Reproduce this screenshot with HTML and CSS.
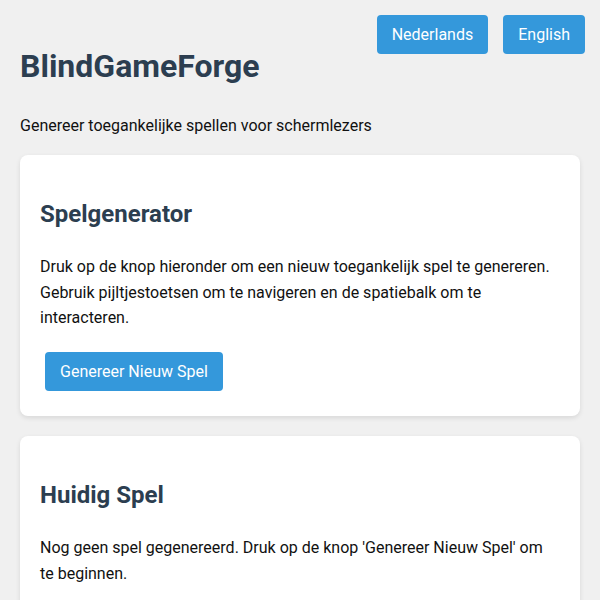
FILE: index.html
```html
<!DOCTYPE html>
<html lang="nl">
<head>
  <meta charset="UTF-8">
  <title>BlindGameForge</title>
  <link rel="stylesheet" href="styles.css">
</head>
<body>

  <div class="talen">
    <button class="knop">Nederlands</button>
    <button class="knop">English</button>
  </div>

  <h1>BlindGameForge</h1>
  <p>Genereer toegankelijke spellen voor schermlezers</p>

  <div class="kaart">
    <h2>Spelgenerator</h2>
    <p>Druk op de knop hieronder om een nieuw toegankelijk spel te genereren. Gebruik pijltjestoetsen om te navigeren en de spatiebalk om te interacteren.</p>
    <button class="knop">Genereer Nieuw Spel</button>
  </div>

  <div class="kaart">
    <h2>Huidig Spel</h2>
    <p>Nog geen spel gegenereerd. Druk op de knop 'Genereer Nieuw Spel' om te beginnen.</p>
  </div>

</body>
</html>
```

FILE: styles.css
```css
body { font-family: Roboto, "Liberation Sans", Arial, sans-serif; line-height: 1.6; margin: 0; padding: 20px; background-color: #f0f0f0; color: #111; }
h1, h2 { color: #2c3e50; }
h1 { font-size: 32px; margin: 21px 0; }
h2 { font-size: 24px; margin: 20px 0 21px; }
p { margin: 16px 0; }
.talen { float: right; display: flex; gap: 15px; margin: -5px -5px 0 0; }
.kaart { background: #fff; border-radius: 8px; padding: 20px 20px 20px; margin-bottom: 20px; box-shadow: 0 2px 5px rgba(0, 0, 0, 0.1); }
.knop { font-family: inherit; font-size: 16px; line-height: normal; background-color: #3498db; color: #fff; border: none; border-radius: 4px; padding: 10px 15px; margin: 0; cursor: pointer; }
.kaart .knop { margin: 5px; }
```
